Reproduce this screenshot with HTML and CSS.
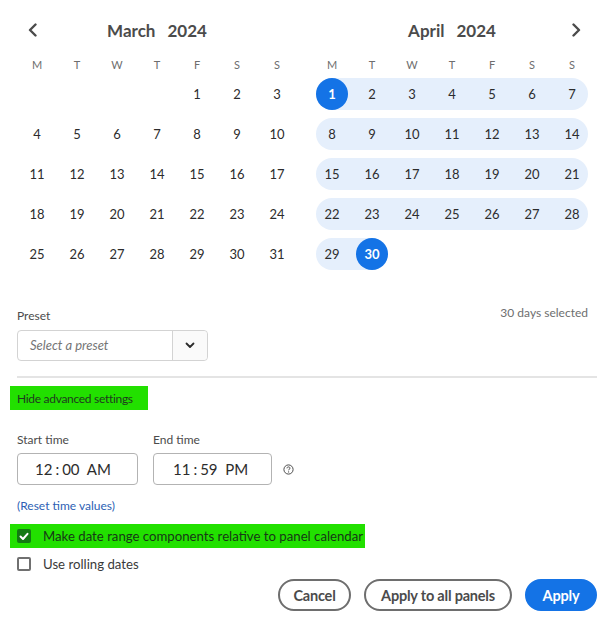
FILE: index.html
```html
<!DOCTYPE html>
<html>
<head>
<meta charset="utf-8">
<link rel="stylesheet" href="styles.css">
</head>
<body>
<div class="panel">
  <div class="calendars">
    <div class="month">
      <div class="month-head">
        <span class="nav"><svg width="12" height="14" viewBox="0 0 12 14"><path d="M8.5 1.5 L3 7 L8.5 12.5" fill="none" stroke="#4b4b4b" stroke-width="2.4" stroke-linecap="round" stroke-linejoin="round"/></svg></span>
        <div class="title"><span>March</span><span>2024</span></div>
        <span class="nav"></span>
      </div>
      <div class="weekdays"><span>M</span><span>T</span><span>W</span><span>T</span><span>F</span><span>S</span><span>S</span></div>
      <div class="days">
        <span></span><span></span><span></span><span></span><span class="d">1</span><span class="d">2</span><span class="d">3</span>
        <span class="d">4</span><span class="d">5</span><span class="d">6</span><span class="d">7</span><span class="d">8</span><span class="d">9</span><span class="d">10</span>
        <span class="d">11</span><span class="d">12</span><span class="d">13</span><span class="d">14</span><span class="d">15</span><span class="d">16</span><span class="d">17</span>
        <span class="d">18</span><span class="d">19</span><span class="d">20</span><span class="d">21</span><span class="d">22</span><span class="d">23</span><span class="d">24</span>
        <span class="d">25</span><span class="d">26</span><span class="d">27</span><span class="d">28</span><span class="d">29</span><span class="d">30</span><span class="d">31</span>
      </div>
    </div>
    <div class="month">
      <div class="month-head">
        <span class="nav"></span>
        <div class="title"><span>April</span><span>2024</span></div>
        <span class="nav"><svg width="12" height="14" viewBox="0 0 12 14"><path d="M3.5 1.5 L9 7 L3.5 12.5" fill="none" stroke="#4b4b4b" stroke-width="2.4" stroke-linecap="round" stroke-linejoin="round"/></svg></span>
      </div>
      <div class="weekdays"><span>M</span><span>T</span><span>W</span><span>T</span><span>F</span><span>S</span><span>S</span></div>
      <div class="days">
        <span class="d r rs"><b class="sel">1</b></span><span class="d r">2</span><span class="d r">3</span><span class="d r">4</span><span class="d r">5</span><span class="d r">6</span><span class="d r re">7</span>
        <span class="d r rs">8</span><span class="d r">9</span><span class="d r">10</span><span class="d r">11</span><span class="d r">12</span><span class="d r">13</span><span class="d r re">14</span>
        <span class="d r rs">15</span><span class="d r">16</span><span class="d r">17</span><span class="d r">18</span><span class="d r">19</span><span class="d r">20</span><span class="d r re">21</span>
        <span class="d r rs">22</span><span class="d r">23</span><span class="d r">24</span><span class="d r">25</span><span class="d r">26</span><span class="d r">27</span><span class="d r re">28</span>
        <span class="d r rs">29</span><span class="d r re"><b class="sel">30</b></span><span></span><span></span><span></span><span></span><span></span>
      </div>
    </div>
  </div>

  <div class="preset-row">
    <div class="preset">
      <div class="label">Preset</div>
      <div class="select">
        <span class="placeholder">Select a preset</span>
        <span class="select-btn"><svg width="10" height="7" viewBox="0 0 10 7"><path d="M1.5 1.5 L5 5 L8.5 1.5" fill="none" stroke="#2c2c2c" stroke-width="1.8" stroke-linecap="round" stroke-linejoin="round"/></svg></span>
      </div>
    </div>
    <div class="count">30 days selected</div>
  </div>

  <div class="rule"></div>

  <div class="hl hide-adv">Hide advanced settings</div>

  <div class="times">
    <div class="time-field">
      <div class="label">Start time</div>
      <div class="time-input start">12<span class="colon">:</span>00&nbsp; AM</div>
    </div>
    <div class="time-field">
      <div class="label">End time</div>
      <div class="time-input end">11<span class="colon">:</span>59&nbsp; PM</div>
    </div>
    <span class="help"><svg width="11" height="11" viewBox="0 0 11 11"><circle cx="5.5" cy="5.5" r="4.6" fill="none" stroke="#4b4b4b" stroke-width="1"/><path d="M4 4.3 C4 3.3 4.7 2.9 5.5 2.9 C6.3 2.9 7 3.4 7 4.2 C7 5.1 5.6 5.2 5.6 6.3" fill="none" stroke="#4b4b4b" stroke-width="1"/><circle cx="5.6" cy="7.9" r="0.6" fill="#4b4b4b"/></svg></span>
  </div>

  <div class="reset">(Reset time values)</div>

  <div class="hl check-row">
    <span class="box checked"><svg width="10" height="9" viewBox="0 0 10 9"><path d="M1.5 4.5 L4 7 L8.5 1.8" fill="none" stroke="#fff" stroke-width="2" stroke-linecap="round" stroke-linejoin="round"/></svg></span>
    <span>Make date range components relative to panel calendar</span>
  </div>
  <div class="check-row plain">
    <span class="box"></span>
    <span>Use rolling dates</span>
  </div>

  <div class="actions">
    <button class="btn cancel">Cancel</button>
    <button class="btn all">Apply to all panels</button>
    <button class="btn primary">Apply</button>
  </div>
</div>
</body>
</html>
```

FILE: styles.css
```css
* { box-sizing: border-box; }
body {
  margin: 0;
  background: #fff;
  font-family: "Lato", "Open Sans", sans-serif;
  color: #2c2c2c;
}
.panel {
  width: 610px;
  padding: 14px 13px 0 17px;
}
.calendars {
  display: flex;
  gap: 15px;
}
.month { width: 280px; }
.month-head {
  height: 32px;
  display: grid;
  grid-template-columns: 32px 1fr 32px;
  align-items: center;
}
.nav {
  display: flex;
  justify-content: center;
  align-items: center;
}
.title {
  display: flex;
  justify-content: center;
  gap: 12px;
  font-size: 17px;
  font-weight: 700;
  color: #4b4b4b;
}
.weekdays {
  margin-top: 6px;
  height: 24px;
  display: grid;
  grid-template-columns: repeat(7, 40px);
  align-items: center;
  font-size: 11px;
  color: #6e6e6e;
  text-align: center;
}
.days {
  margin-top: 2px;
  display: grid;
  grid-template-columns: repeat(7, 40px);
  grid-auto-rows: 32px;
  row-gap: 8px;
}
.d {
  position: relative;
  isolation: isolate;
  display: flex;
  align-items: center;
  justify-content: center;
  font-size: 13px;
  color: #2c2c2c;
}
.r::before {
  content: "";
  position: absolute;
  top: 0; bottom: 0; left: 0; right: 0;
  background: #e5effc;
  z-index: -1;
}
.rs::before { left: 4px; border-radius: 16px 0 0 16px; }
.re::before { right: 4px; border-radius: 0 16px 16px 0; }
.sel {
  width: 32px;
  height: 32px;
  border-radius: 50%;
  background: #1473e6;
  color: #fff;
  display: flex;
  align-items: center;
  justify-content: center;
  font-weight: 700;
}

.preset-row {
  margin-top: 38px;
  display: flex;
  justify-content: space-between;
  align-items: flex-start;
  padding-right: 9px;
}
.label {
  font-size: 12px;
  line-height: 16px;
  color: #4b4b4b;
}
.count {
  margin-top: -3px;
  font-size: 12px;
  line-height: 16px;
  color: #6e6e6e;
}
.select {
  margin-top: 6px;
  width: 191px;
  height: 31px;
  border: 1px solid #d3d3d3;
  border-radius: 4px;
  display: flex;
}
.placeholder {
  flex: 1;
  padding-left: 12px;
  padding-bottom: 2px;
  display: flex;
  align-items: center;
  font-style: italic;
  font-size: 13px;
  color: #757575;
}
.select-btn {
  width: 35px;
  border-left: 1px solid #d3d3d3;
  background: #fafafa;
  border-radius: 0 4px 4px 0;
  display: flex;
  align-items: center;
  justify-content: center;
}
.rule {
  margin-top: 15px;
  height: 2px;
  width: 580px;
  background: #e4e4e4;
}
.hl { background: #22e000; }
.hide-adv {
  margin-top: 8px;
  margin-left: -7px;
  width: 138px;
  height: 24px;
  padding-left: 7px;
  display: flex;
  align-items: center;
  font-size: 12px;
  letter-spacing: -0.3px;
  color: #1f3a1f;
}
.times {
  margin-top: 22px;
  display: flex;
  align-items: flex-end;
  gap: 15px;
}
.time-field .label { margin-bottom: 5px; }
.time-input {
  height: 32px;
  border: 1px solid #b3b3b3;
  border-radius: 4px;
  display: flex;
  align-items: center;
  font-size: 15px;
  color: #2c2c2c;
  white-space: pre;
}
.time-input.start { width: 121px; padding-left: 17px; }
.time-input.end { width: 119px; padding-left: 19px; }
.colon { padding: 0 3px; }
.help {
  height: 32px;
  margin-left: -4px;
  display: flex;
  align-items: center;
}
.reset {
  margin-top: 13px;
  font-size: 12px;
  line-height: 16px;
  color: #2d5fb4;
}
.check-row {
  display: flex;
  align-items: center;
  gap: 12px;
  height: 24px;
  font-size: 13.2px;
  white-space: nowrap;
  color: #3a3a3a;
}
.check-row.hl {
  margin-top: 10px;
  margin-left: -7px;
  padding-left: 7px;
  width: 355px;
  color: #163816;
}
.check-row.plain { margin-top: 4px; }
.box {
  flex: none;
  width: 14px;
  height: 14px;
  border: 2px solid #707070;
  border-radius: 2px;
  display: flex;
  align-items: center;
  justify-content: center;
}
.box.checked {
  background: #137a13;
  border-color: #137a13;
}
.actions {
  margin-top: 3px;
  display: flex;
  justify-content: flex-end;
  gap: 13px;
}
.btn {
  height: 32px;
  padding: 0;
  border: 2px solid #6e6e6e;
  border-radius: 16px;
  background: #fff;
  font-family: "Lato", "Open Sans", sans-serif;
  font-size: 14.5px;
  font-weight: 700;
  letter-spacing: -0.2px;
  color: #4b4b4b;
  white-space: nowrap;
}
.btn.cancel { width: 73px; }
.btn.all { width: 148px; }
.btn.primary {
  width: 72px;
  background: #1473e6;
  border-color: #1473e6;
  color: #fff;
}
```
